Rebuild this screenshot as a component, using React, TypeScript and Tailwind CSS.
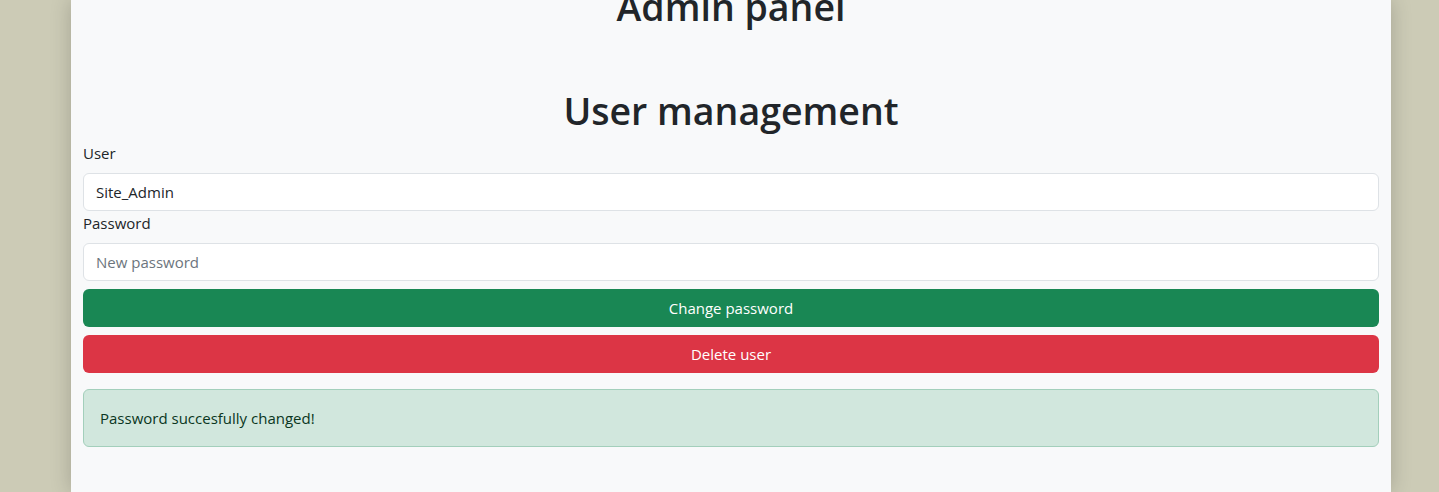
export default function App() {
  return (
    <div
      className="h-[492px] overflow-hidden bg-[#cccbb6] text-[#212529]"
      style={{ fontFamily: '"Open Sans", "Noto Sans", sans-serif' }}
    >
      <div className="ml-[71px] flow-root h-full w-[1320px] bg-[#f8f9fa] px-3 shadow-[0_0_20px_rgba(0,0,0,0.2)]">
        <h1 className="-mt-[17px] mb-0 text-center text-[37.5px] font-semibold leading-[48px]">
          Admin panel
        </h1>
        <h1 className="mt-[56px] mb-[6px] text-center text-[37.5px] font-semibold leading-[48px]">
          User management
        </h1>
        <form onSubmit={(e) => e.preventDefault()}>
          <label className="mb-2 block text-[15px] leading-6">User</label>
          <input
            defaultValue="Site_Admin"
            className="block h-[38px] w-full rounded-md border border-[#dee2e6] bg-white px-3 text-[15px] outline-none"
          />
          <label className="mb-2 block text-[15px] leading-6">Password</label>
          <input
            type="password"
            placeholder="New password"
            className="block h-[38px] w-full rounded-md border border-[#dee2e6] bg-white px-3 text-[15px] outline-none placeholder:text-[#6c757d]"
          />
          <button className="mt-2 block h-[38px] w-full rounded-md bg-[#198754] text-[15px] text-white">
            Change password
          </button>
          <button className="mt-2 block h-[38px] w-full rounded-md bg-[#dc3545] text-[15px] text-white">
            Delete user
          </button>
        </form>
        <div className="mt-4 rounded-md border border-[#a3cfbb] bg-[#d1e7dd] px-4 py-4 text-[15px] leading-6 text-[#0a3622]">
          Password succesfully changed!
        </div>
      </div>
    </div>
  );
}
